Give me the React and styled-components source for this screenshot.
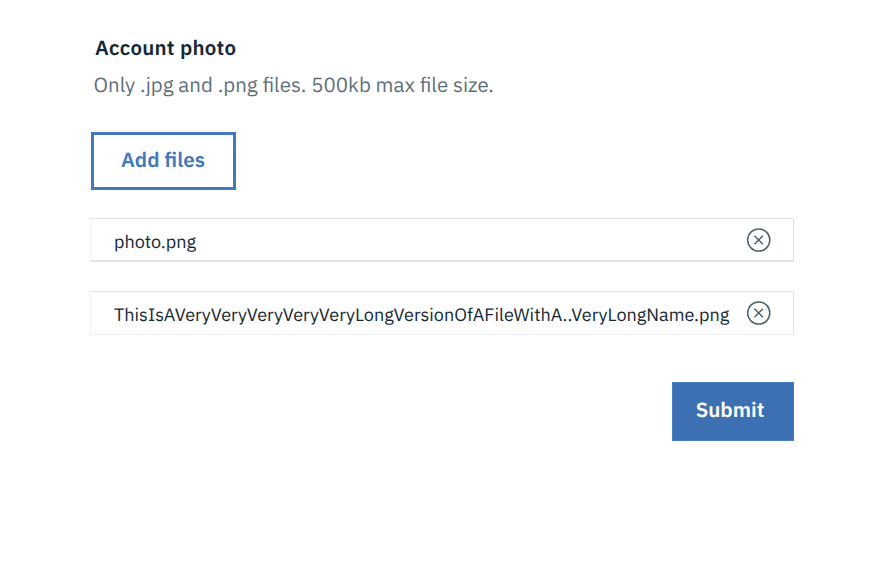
import React from "react";
import styled, { createGlobalStyle } from "styled-components";

const GlobalStyle = createGlobalStyle`
  *, *::before, *::after { box-sizing: border-box; }
  body {
    margin: 0;
    background: #fff;
    font-family: "IBM Plex Sans", Roboto, "Liberation Sans", sans-serif;
    color: #152934;
    text-rendering: geometricPrecision;
  }
`;

const Form = styled.form`
  display: flex;
  flex-direction: column;
  align-items: flex-start;
  width: 885px;
  height: 586px;
  padding: 34px 91px 0 90px;
`;

const Title = styled.h1`
  margin: 0 0 0 5px;
  font-size: 20.5px;
  font-weight: 600;
  line-height: 28px;
  letter-spacing: 0.27px;
  white-space: nowrap;
`;

const Description = styled.p`
  margin: 9px 0 0 3.5px;
  font-size: 20.5px;
  line-height: 28px;
  color: #5f6f7a;
  white-space: nowrap;
`;

const Button = styled.button`
  display: flex;
  align-items: center;
  justify-content: center;
  height: 59px;
  padding: 0 0 3px;
  font-family: inherit;
  font-size: 20.6px;
  font-weight: 600;
  text-rendering: inherit;
`;

const AddButton = styled(Button)`
  width: 145px;
  height: 58px;
  margin: 33px 0 0 1px;
  padding: 0 1px 3px 0;
  border: 3px solid #4178be;
  background: #fff;
  color: #4178be;
`;

const SubmitButton = styled(Button)`
  align-self: flex-end;
  width: 122px;
  margin-top: 47px;
  padding: 0 6px 4px 0;
  border: 1px solid #4a80c5;
  background: #3d70b2;
  color: #fff;
`;

const FileList = styled.ul`
  display: flex;
  flex-direction: column;
  gap: 29px;
  align-self: stretch;
  margin: 28px 0 0;
  padding: 0;
  list-style: none;
`;

const FileRow = styled.li`
  display: flex;
  align-items: center;
  justify-content: space-between;
  height: 44px;
  padding: 0 22px 0 23px;
  border: 1px solid #dfe4e7;
  border-left-color: #f1f4f6;
  border-bottom: ${(p) => (p.$faint ? "1px solid #eef2f4" : "2px solid #dfe4e7")};
`;

const FileName = styled.span`
  padding-top: ${(p) => (p.$faint ? "1px" : "2px")};
  font-size: 18.07px;
  line-height: 24px;
  white-space: nowrap;
`;

const RemoveButton = styled.button`
  display: flex;
  padding: 0;
  border: 0;
  background: none;
  color: #50616c;
`;

const files = [
  { name: "photo.png" },
  {
    name: "ThisIsAVeryVeryVeryVeryVeryLongVersionOfAFileWithA..VeryLongName.png",
    faint: true,
  },
];

function CloseIcon() {
  return (
    <svg width="24" height="24" viewBox="0 0 24 24" fill="none" stroke="currentColor" strokeWidth="1.5">
      <circle cx="11.7" cy="12" r="11.1" />
      <path d="M7.5 7.8l8.4 8.4M15.9 7.8l-8.4 8.4" />
    </svg>
  );
}

export default function App() {
  return (
    <>
      <GlobalStyle />
      <Form onSubmit={(e) => e.preventDefault()}>
        <Title>Account photo</Title>
        <Description>Only .jpg and .png files. 500kb max file size.</Description>
        <AddButton type="button">Add files</AddButton>
        <FileList>
          {files.map((f) => (
            <FileRow key={f.name} $faint={f.faint}>
              <FileName $faint={f.faint}>{f.name}</FileName>
              <RemoveButton type="button" aria-label={`Remove ${f.name}`}>
                <CloseIcon />
              </RemoveButton>
            </FileRow>
          ))}
        </FileList>
        <SubmitButton type="submit">Submit</SubmitButton>
      </Form>
    </>
  );
}
